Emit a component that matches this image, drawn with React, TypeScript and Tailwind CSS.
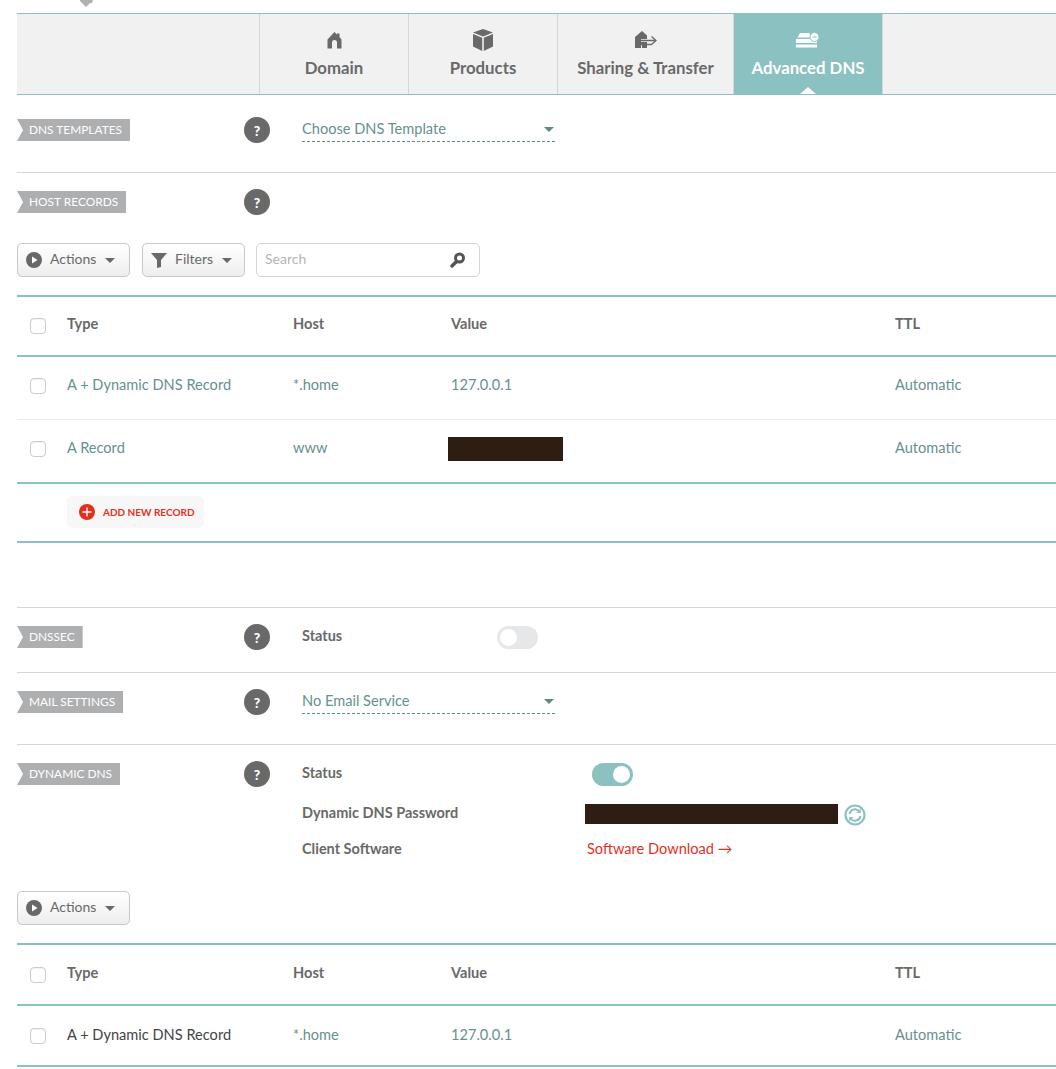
import { ReactNode } from "react";

const font = "font-['Lato','Liberation_Sans',sans-serif]";

function Tab({ label, icon, active, width }: { label: string; icon: ReactNode; active?: boolean; width: string }) {
  return (
    <div
      className={`relative flex flex-col items-center border-r border-[#d6d6d6] pt-[13px] ${width} ${
        active ? "bg-[#8cc1c1] text-white" : "text-[#696969]"
      }`}
    >
      <div className="flex h-[26px] items-center justify-center">{icon}</div>
      <div className="mt-[5px] text-[16.8px] leading-[20px] font-bold whitespace-nowrap">{label}</div>
      {active && (
        <div className="absolute bottom-0 left-1/2 h-0 w-0 -translate-x-1/2 border-x-[8px] border-b-[7px] border-x-transparent border-b-white" />
      )}
    </div>
  );
}

function Label({ children }: { children: string }) {
  return (
    <div className="flex h-[22px] w-fit items-center bg-[#aeafb1] pr-[8px] pl-[12px] text-[11.9px] text-white uppercase [clip-path:polygon(0_0,100%_0,100%_100%,0_100%,6px_50%)]">
      {children}
    </div>
  );
}

function Help() {
  return (
    <div className="flex h-[26px] w-[26px] shrink-0 items-center justify-center rounded-full bg-[#696969] text-[14px] font-black text-white">
      ?
    </div>
  );
}

function Checkbox() {
  return <div className="h-[16px] w-[16px] rounded-[4px] border border-[#cccccc] bg-white shadow-[inset_0_1px_1px_rgba(0,0,0,0.05)]" />;
}

function Toggle({ on }: { on?: boolean }) {
  return (
    <div className={`flex h-[23px] w-[41px] items-center rounded-full px-[3px] ${on ? "justify-end bg-[#8cc1c1]" : "justify-start bg-[#e6e7e8]"}`}>
      <div className="h-[17px] w-[17px] rounded-full bg-white" />
    </div>
  );
}

function Select({ label }: { label: string }) {
  return (
    <div className="flex h-[26px] w-[253px] items-center justify-between border-b border-dashed border-[#5f8a8a] text-[14.6px] text-[#66918f]">
      <span>{label}</span>
      <span className="mt-[2px] mr-[1px] h-0 w-0 border-x-[5px] border-t-[5px] border-x-transparent border-t-[#5f8a8a]" />
    </div>
  );
}

function Caret() {
  return <span className="h-0 w-0 border-x-[5px] border-t-[5px] border-x-transparent border-t-[#696969]" />;
}

function ActionsButton() {
  return (
    <div className="flex h-[34px] w-[113px] items-center rounded-[5px] border border-[#c8c8c8] bg-gradient-to-b from-white to-[#eeeeee] pl-[8px] text-[14px] text-[#696969]">
      <svg width="16" height="16" viewBox="0 0 16 16">
        <circle cx="8" cy="8" r="8" fill="#696969" />
        <path d="M6 4.5 11.5 8 6 11.5Z" fill="#fff" />
      </svg>
      <span className="mr-[9px] ml-[8px] pb-[4px]">Actions</span>
      <Caret />
    </div>
  );
}

const gridCols = "grid grid-cols-[50px_226px_158px_444px_1fr] items-center";

function HeaderRow({ className }: { className: string }) {
  return (
    <div className={`${gridCols} border-y-2 border-[#8cc1c1] text-[14.6px] font-bold text-[#696969] ${className}`}>
      <div className="pl-[13px]"><Checkbox /></div>
      <div className="pb-[4px]">Type</div>
      <div className="pb-[4px]">Host</div>
      <div className="pb-[4px]">Value</div>
      <div className="pb-[4px]">TTL</div>
    </div>
  );
}

function Row({ type, host, value, dark, className }: { type: string; host: string; value: ReactNode; dark?: boolean; className: string }) {
  return (
    <div className={`${gridCols} text-[14.6px] text-[#66918f] ${className}`}>
      <div className="pl-[13px]"><Checkbox /></div>
      <div className={`pb-[2px] ${dark ? "text-[#444444]" : ""}`}>{type}</div>
      <div className="pb-[2px]">{host}</div>
      <div className="pb-[2px]">{value}</div>
      <div className="pb-[2px]">Automatic</div>
    </div>
  );
}

function Redacted({ className }: { className: string }) {
  return <div className={`bg-[#2e1d13] ${className}`} />;
}

export default function App() {
  return (
    <div className={`h-[1069px] w-[1056px] overflow-hidden bg-white pl-[17px] ${font}`}>
      <div className="h-[13px] pl-[63px]">
        <svg width="13" height="7" viewBox="0 0 13 7">
          <path d="M0 0H13L12 3H10L6 7 2 3 0 1Z" fill="#b0b0b0" />
        </svg>
      </div>

      {/* tabs */}
      <div className="flex h-[82px] border-y border-[#8cc1c1] bg-[#f1f1f1]">
        <div className="w-[243px] border-r border-[#d6d6d6]" />
        <Tab
          label="Domain"
          width="w-[149px]"
          icon={
            <svg width="17" height="17" viewBox="0 0 17 17" fill="#696969">
              <path d="M8.5 0 11 2.5V1.500H13.500V5L15.500 7.500V16.500H11V10.500A2.500 2.500 0 0 0 6 10.500V16.500H1.500V7.500Z" />
            </svg>
          }
        />
        <Tab
          label="Products"
          width="w-[149px]"
          icon={
            <svg width="22" height="22" viewBox="0 0 22 22" fill="#696969">
              <path d="M11 0 21 3.500 11 7.500 1 3.500Z" />
              <path d="M1 5 10.200 8.800V22L1 17.500Z" />
              <path d="M21 5 11.800 8.800V22L21 17.500Z" />
            </svg>
          }
        />
        <Tab
          label="Sharing & Transfer"
          width="w-[176px]"
          icon={
            <svg width="24" height="18" viewBox="0 0 24 18" fill="#696969">
              <path d="M8 0 13 4.500V8H7V11H13V13H7V17H1V6Z" />
              <path d="M13 17H8V14H13Z" />
              <path d="M7 9.500H21M17.500 5.500 22 9.500 17.500 13.500M7 13.500H18" stroke="#696969" strokeWidth="1.300" fill="none" />
            </svg>
          }
        />
        <Tab
          label="Advanced DNS"
          active
          width="w-[149px]"
          icon={
            <svg width="24" height="16" viewBox="0 0 24 16" fill="#fff">
              <path d="M4 1H13L15.500 5.500H1.500Z" />
              <path d="M0 7H21V11H0Z" />
              <path d="M0 12.500H21V15.500H0Z" />
              <circle cx="18.500" cy="5" r="4.500" stroke="#8cc1c1" strokeWidth="1" />
              <path d="M16.500 5H20.500" stroke="#8cc1c1" strokeWidth="1" />
            </svg>
          }
        />
      </div>

      {/* dns templates */}
      <div className="flex h-[78px] items-start border-b border-[#d6d6d6] pt-[22px]">
        <div className="w-[227px] pt-[2px]"><Label>DNS Templates</Label></div>
        <Help />
        <div className="ml-[32px] -mt-[1px]"><Select label="Choose DNS Template" /></div>
      </div>

      {/* host records */}
      <div className="flex h-[60px] items-start pt-[16px]">
        <div className="w-[227px] pt-[2px]"><Label>Host Records</Label></div>
        <Help />
      </div>

      <div className="flex h-[62px] items-start gap-[12px] pt-[10px]">
        <ActionsButton />
        <div className="flex h-[34px] w-[103px] items-center rounded-[5px] border border-[#c8c8c8] bg-gradient-to-b from-white to-[#eeeeee] pl-[8px] text-[14px] text-[#696969]">
          <svg width="16" height="16" viewBox="0 0 16 16">
            <path d="M0 1H16L10 8V15L6 16V8Z" fill="#696969" />
          </svg>
          <span className="mr-[9px] ml-[8px] pb-[4px]">Filters</span>
          <Caret />
        </div>
        <div className="-ml-[1px] flex h-[34px] w-[224px] items-center justify-between rounded-[5px] border border-[#d6d6d6] pr-[13px] pl-[8px] text-[14px] text-[#b5b5b5]">
          <span className="pb-[4px]">Search</span>
          <svg width="16" height="16" viewBox="0 0 16 16" fill="none" stroke="#555555">
            <circle cx="9.500" cy="6" r="4" strokeWidth="3" />
            <path d="M6 10 2 14" strokeWidth="3.400" strokeLinecap="round" />
          </svg>
        </div>
      </div>

      {/* records table */}
      <div>
        <HeaderRow className="h-[62px]" />
        <Row className="h-[63px] border-b border-[#ebebeb] pb-[4px]" type="A + Dynamic DNS Record" host="*.home" value="127.0.0.1" />
        <Row className="h-[64px] border-b-2 border-[#8cc1c1] pb-[4px]" type="A Record" host="www" value={<Redacted className="-ml-[3px] mt-[1px] h-[24px] w-[115px]" />} />
      </div>
      <div className="h-[59px] border-b-2 border-[#8cc1c1] pt-[12px] pl-[50px]">
        <div className="flex h-[32px] w-[137px] items-center rounded-[5px] bg-[#f7f7f7] pl-[12px] text-[10px] font-bold text-[#e8301f]">
          <svg width="16" height="16" viewBox="0 0 16 16">
            <circle cx="8" cy="8" r="8" fill="#e0301e" />
            <path d="M8 3.500V12.500M3.500 8H12.500" stroke="#fff" strokeWidth="1.300" />
          </svg>
          <span className="ml-[8px]">ADD NEW RECORD</span>
        </div>
      </div>

      <div className="h-[65px] border-b border-[#d6d6d6]" />

      {/* dnssec */}
      <div className="flex h-[65px] items-start border-b border-[#d6d6d6] pt-[16px]">
        <div className="w-[227px] pt-[2px]"><Label>DNSSEC</Label></div>
        <Help />
        <div className="ml-[32px] w-[195px] pt-[3px] text-[14.5px] leading-[18px] font-bold text-[#696969]">Status</div>
        <div className="pt-[2px]"><Toggle /></div>
      </div>

      {/* mail settings */}
      <div className="flex h-[72px] items-start border-b border-[#d6d6d6] pt-[16px]">
        <div className="w-[227px] pt-[2px]"><Label>Mail Settings</Label></div>
        <Help />
        <div className="ml-[32px] -mt-[1px]"><Select label="No Email Service" /></div>
      </div>

      {/* dynamic dns */}
      <div className="flex h-[146px] items-start pt-[16px]">
        <div className="w-[227px] pt-[2px]"><Label>Dynamic DNS</Label></div>
        <Help />
        <div className="ml-[32px] flex flex-col text-[14.5px] font-bold text-[#696969]">
          <div className="flex h-[26px] items-center">
            <div className="w-[290px] pb-[3px]">Status</div>
            <Toggle on />
          </div>
          <div className="mt-[15px] flex h-[24px] items-center">
            <div className="w-[283px] pb-[2px]">Dynamic DNS Password</div>
            <Redacted className="h-[20px] w-[253px]" />
            <svg className="mt-[2px] ml-[6px]" width="22" height="22" viewBox="0 0 22 22" fill="none" stroke="#8cc1c1">
              <circle cx="11" cy="11" r="9.500" strokeWidth="2.200" />
              <path d="M5.500 10A5.600 5.600 0 0 1 15.500 7.500M16.500 12A5.600 5.600 0 0 1 6.500 14.500" strokeWidth="2" />
              <path d="M16.800 4.500V9H12.500ZM5.200 17.500V13H9.500Z" fill="#8cc1c1" stroke="none" />
            </svg>
          </div>
          <div className="mt-[11px] flex h-[24px] items-center">
            <div className="w-[285px]">Client Software</div>
            <div className="text-[14.6px] font-normal text-[#e8301f]">Software Download →</div>
          </div>
        </div>
      </div>

      <div className="h-[52px]">
        <ActionsButton />
      </div>
      <div>
        <HeaderRow className="h-[63px]" />
        <Row className="h-[61px] border-b-2 border-[#8cc1c1]" dark type="A + Dynamic DNS Record" host="*.home" value="127.0.0.1" />
      </div>
    </div>
  );
}
